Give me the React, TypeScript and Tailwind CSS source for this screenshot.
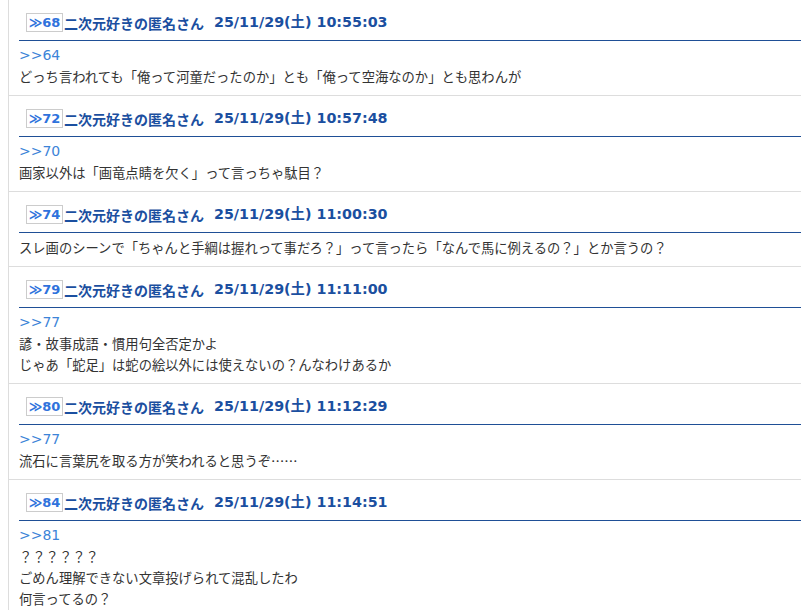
import React from "react";

type Post = {
  no: number;
  time: string;
  reply?: string;
  lines: string[];
};

const posts: Post[] = [
  {
    no: 68,
    time: "25/11/29(土) 10:55:03",
    reply: ">>64",
    lines: ["どっち言われても「俺って河童だったのか」とも「俺って空海なのか」とも思わんが"],
  },
  {
    no: 72,
    time: "25/11/29(土) 10:57:48",
    reply: ">>70",
    lines: ["画家以外は「画竜点睛を欠く」って言っちゃ駄目？"],
  },
  {
    no: 74,
    time: "25/11/29(土) 11:00:30",
    lines: ["スレ画のシーンで「ちゃんと手綱は握れって事だろ？」って言ったら「なんで馬に例えるの？」とか言うの？"],
  },
  {
    no: 79,
    time: "25/11/29(土) 11:11:00",
    reply: ">>77",
    lines: ["諺・故事成語・慣用句全否定かよ", "じゃあ「蛇足」は蛇の絵以外には使えないの？んなわけあるか"],
  },
  {
    no: 80,
    time: "25/11/29(土) 11:12:29",
    reply: ">>77",
    lines: ["流石に言葉尻を取る方が笑われると思うぞ……"],
  },
  {
    no: 84,
    time: "25/11/29(土) 11:14:51",
    reply: ">>81",
    lines: ["？？？？？？", "ごめん理解できない文章投げられて混乱したわ", "何言ってるの？"],
  },
];

const latin = { fontFamily: '"DejaVu Sans", "Noto Sans CJK JP", sans-serif' };

function PostItem({ post }: { post: Post }) {
  return (
    <div className="border-b border-[#dddddd] pl-[10px]">
      <div className="h-[41px] flex items-start pt-[13px] pl-[7px] border-b border-[#1f4f96] overflow-hidden">
        <span
          className="h-[19px] w-[37px] shrink-0 flex items-center justify-center border border-[#cccccc] bg-white text-[13px] font-bold text-[#2f72dc] leading-none"
          style={latin}
        >
          ≫{post.no}
        </span>
        <span className="ml-[1px] h-[19px] flex items-center text-[14px] font-bold text-[#1b4fa0] leading-none whitespace-pre">
          <span>二次元好きの匿名さん</span>
          <span className="text-[14.3px]" style={latin}>{"  " + post.time}</span>
        </span>
      </div>
      <div className="pt-[4px] pb-[8px] text-[13.3px] text-[#333333]">
        {post.reply && (
          <div className="h-[21px] leading-[21px] text-[14px] text-[#3c84d8]" style={latin}>
            {post.reply}
          </div>
        )}
        {post.lines.map((l, i) => (
          <div key={i} className="h-[21px] leading-[21px]">
            {l}
          </div>
        ))}
      </div>
    </div>
  );
}

export default function App() {
  return (
    <div
      className="h-[610px] overflow-hidden bg-white"
      style={{ fontFamily: '"Noto Sans CJK JP", "Noto Sans", sans-serif' }}
    >
      <div className="ml-2 border-l border-[#dddddd] min-h-full">
        {posts.map((p) => (
          <PostItem key={p.no} post={p} />
        ))}
      </div>
    </div>
  );
}
